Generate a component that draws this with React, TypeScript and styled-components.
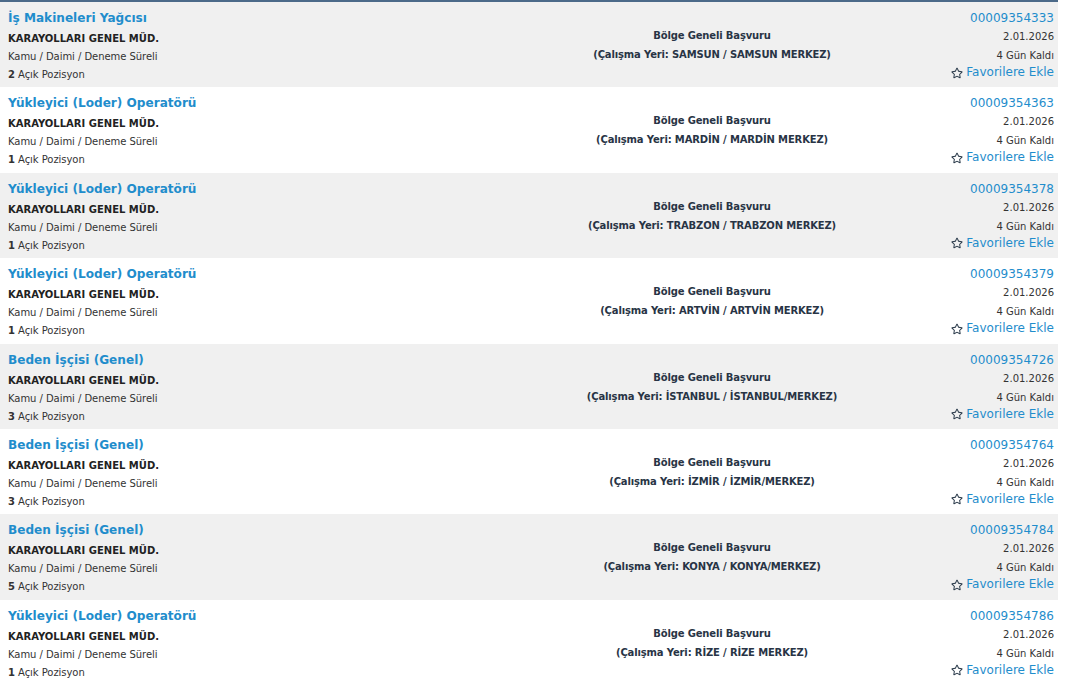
import React from "react";
import styled, { createGlobalStyle } from "styled-components";
import { FaRegStar } from "react-icons/fa";

const Global = createGlobalStyle`
  html, body { margin: 0; padding: 0; background: #ffffff; }
  body { font-family: "DejaVu Sans", Verdana, sans-serif; }
`;

const List = styled.div`
  width: 1058px;
  border-top: 2px solid #4c6a89;
  display: flex;
  flex-direction: column;
`;

const Row = styled.div<{ $alt: boolean }>`
  display: grid;
  grid-template-columns: 518px 372px 1fr;
  height: 85.4px;
  box-sizing: border-box;
  background: ${(p) => (p.$alt ? "#ffffff" : "#f0f0f0")};
  padding: 7px 4px 0 8px;
`;

const Left = styled.div`
  display: flex;
  flex-direction: column;
`;

const Title = styled.a`
  font-size: 12.1px;
  font-weight: bold;
  color: #1f8dcc;
  line-height: 18px;
  text-decoration: none;
`;

const Company = styled.div`
  margin-top: 5px;
  font-size: 10px;
  font-weight: bold;
  color: #222;
  line-height: 14px;
`;

const Info = styled.div`
  margin-top: 4px;
  font-size: 10px;
  color: #333;
  line-height: 14px;
  letter-spacing: -0.05px;
`;

const Middle = styled.div`
  display: flex;
  flex-direction: column;
  align-items: center;
  padding-top: 20px;
  font-size: 10px;
  font-weight: bold;
  color: #283445;
  line-height: 14px;
  gap: 5px;
  letter-spacing: -0.15px;
`;

const Right = styled.div`
  display: flex;
  flex-direction: column;
  align-items: flex-end;
`;

const Number = styled.div`
  font-size: 12px;
  color: #1f8dcc;
  line-height: 18px;
`;

const Small = styled.div<{ $gap: number }>`
  margin-top: ${(p) => p.$gap}px;
  font-size: 10px;
  color: #333;
  line-height: 15px;
`;

const Fav = styled.a`
  margin-top: 1px;
  display: flex;
  align-items: center;
  gap: 3px;
  font-size: 12px;
  color: #1f8dcc;
  line-height: 17px;
  text-decoration: none;
  svg { color: #2c3c4c; }
`;

type Job = {
  title: string;
  count: number;
  place: string;
  no: string;
};

const jobs: Job[] = [
  { title: "İş Makineleri Yağcısı", count: 2, place: "SAMSUN / SAMSUN MERKEZ", no: "00009354333" },
  { title: "Yükleyici (Loder) Operatörü", count: 1, place: "MARDİN / MARDİN MERKEZ", no: "00009354363" },
  { title: "Yükleyici (Loder) Operatörü", count: 1, place: "TRABZON / TRABZON MERKEZ", no: "00009354378" },
  { title: "Yükleyici (Loder) Operatörü", count: 1, place: "ARTVİN / ARTVİN MERKEZ", no: "00009354379" },
  { title: "Beden İşçisi (Genel)", count: 3, place: "İSTANBUL / İSTANBUL/MERKEZ", no: "00009354726" },
  { title: "Beden İşçisi (Genel)", count: 3, place: "İZMİR / İZMİR/MERKEZ", no: "00009354764" },
  { title: "Beden İşçisi (Genel)", count: 5, place: "KONYA / KONYA/MERKEZ", no: "00009354784" },
  { title: "Yükleyici (Loder) Operatörü", count: 1, place: "RİZE / RİZE MERKEZ", no: "00009354786" },
];

export default function App() {
  return (
    <>
      <Global />
      <List>
        {jobs.map((j, i) => (
          <Row key={j.no} $alt={i % 2 === 1}>
            <Left>
              <Title>{j.title}</Title>
              <Company>KARAYOLLARI GENEL MÜD.</Company>
              <Info>Kamu / Daimi / Deneme Süreli</Info>
              <Info>
                <b>{j.count}</b> Açık Pozisyon
              </Info>
            </Left>
            <Middle>
              <div>Bölge Geneli Başvuru</div>
              <div>(Çalışma Yeri: {j.place})</div>
            </Middle>
            <Right>
              <Number>{j.no}</Number>
              <Small $gap={2}>2.01.2026</Small>
              <Small $gap={4}>4 Gün Kaldı</Small>
              <Fav>
                <FaRegStar size={12} />
                Favorilere Ekle
              </Fav>
            </Right>
          </Row>
        ))}
      </List>
    </>
  );
}
